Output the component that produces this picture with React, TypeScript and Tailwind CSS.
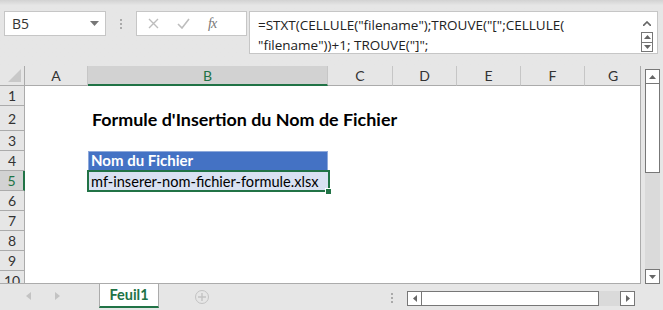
export default function App() {
  const cols = [
    { l: "A", w: "w-[63px]" },
    { l: "B", w: "w-[240px]" },
    { l: "C", w: "w-[65px]" },
    { l: "D", w: "w-[64px]" },
    { l: "E", w: "w-[64px]" },
    { l: "F", w: "w-[64px]" },
    { l: "G", w: "w-[56px]" },
  ];
  const rows = [
    { n: 1, h: "h-[20px]" },
    { n: 2, h: "h-[25px]" },
    { n: 3, h: "h-[20px]" },
    { n: 4, h: "h-[20px]" },
    { n: 5, h: "h-[20px]" },
    { n: 6, h: "h-[20px]" },
    { n: 7, h: "h-[20px]" },
    { n: 8, h: "h-[20px]" },
    { n: 9, h: "h-[20px]" },
    { n: 10, h: "h-[20px]" },
  ];

  return (
    <div className="w-[663px] h-[310px] bg-[#e6e6e6] flex flex-col overflow-hidden font-['Lato','Liberation_Sans',sans-serif] text-[#222]">
      {/* barre de formule */}
      <div className="h-[66px] shrink-0 bg-gradient-to-b from-[#d2d2d2] via-[#e6e6e6] via-[8%] to-[#e6e6e6] flex items-start pt-[11px]">
        <div className="ml-[4px] w-[102px] h-[25px] bg-white border border-[#c6c6c6] flex items-center justify-between pl-[7px] pr-[6px]">
          <span className="text-[14px] font-['Open_Sans',sans-serif] text-[#333]">B5</span>
          <svg width="9" height="5" viewBox="0 0 9 5"><path d="M0 0h9L4.5 5z" fill="#777" /></svg>
        </div>
        <div className="w-[30px] h-[25px] flex flex-col items-center justify-center gap-[2px]">
          <span className="w-[2px] h-[2px] bg-[#aaa]" />
          <span className="w-[2px] h-[2px] bg-[#aaa]" />
          <span className="w-[2px] h-[2px] bg-[#aaa]" />
        </div>
        <div className="w-[111px] h-[25px] bg-white border border-[#c6c6c6] flex items-center pl-[11px] gap-[18px]">
          <svg width="11" height="11" viewBox="0 0 11 11"><path d="M1 1l9 9M10 1l-9 9" stroke="#bdbdbd" strokeWidth="1.4" /></svg>
          <svg width="13" height="11" viewBox="0 0 13 11"><path d="M1 6l4 4 7-9" stroke="#bdbdbd" strokeWidth="1.6" fill="none" /></svg>
          <span className="italic font-['Liberation_Serif',serif] text-[14px] text-[#777] tracking-[-1px]">fx</span>
        </div>
        <div className="ml-[2px] w-[409px] h-[43px] bg-white border border-[#c6c6c6] flex overflow-hidden">
          <div className="flex-1 pl-[8px] pt-[3px] font-['Open_Sans',sans-serif] text-[13.5px] leading-[20px] text-[#222] whitespace-nowrap">
            <div>=STXT(CELLULE("filename");TROUVE("[";CELLULE(</div>
            <div>"filename"))+1; TROUVE("]";</div>
          </div>
          <div className="w-[14px] mr-[3px] flex flex-col items-center pt-[9px]">
            <svg width="8" height="5" viewBox="0 0 8 5"><path d="M0 5L4 1l4 4" stroke="#666" strokeWidth="1.6" fill="none" /></svg>
            <div className="mt-[6px] w-[12px] h-[20px] border border-[#777] flex flex-col">
              <div className="flex-1 border-b border-[#777] flex items-center justify-center">
                <svg width="7" height="4" viewBox="0 0 7 4"><path d="M0 4L3.5 0 7 4z" fill="#666" /></svg>
              </div>
              <div className="flex-1 flex items-center justify-center">
                <svg width="7" height="4" viewBox="0 0 7 4"><path d="M0 0h7L3.5 4z" fill="#666" /></svg>
              </div>
            </div>
          </div>
        </div>
      </div>

      {/* feuille */}
      <div className="h-[218px] shrink-0 flex">
        <div className="w-[641px] h-[218px] bg-white border-r border-b border-[#ababab] flex flex-col overflow-hidden">
          <div className="h-[20px] shrink-0 flex bg-[#e6e6e6]">
            <div className="w-[25px] shrink-0 border-r border-b border-[#ababab] flex items-end justify-end p-[3px]">
              <svg width="13" height="13" viewBox="0 0 13 13"><path d="M13 0v13H0z" fill="#c8c8c8" /></svg>
            </div>
            {cols.map((c, i) => (
              <div
                key={c.l}
                className={
                  c.w +
                  " shrink-0 flex items-center justify-center text-[14px] " +
                  (i < cols.length - 1 ? "border-r border-[#c6c6c6] " : "") +
                  (c.l === "B"
                    ? "bg-[#d2d2d2] text-[#217346] border-b-2 border-b-[#217346]"
                    : "text-[#333] border-b border-b-[#ababab]")
                }
              >
                {c.l}
              </div>
            ))}
          </div>
          {rows.map((r) => (
            <div key={r.n} className={r.h + " shrink-0 flex"}>
              <div
                className={
                  "w-[25px] shrink-0 border-b border-[#ababab] flex items-center justify-center text-[14px] " +
                  (r.n === 5
                    ? "bg-[#d2d2d2] text-[#217346] border-r-2 border-r-[#217346]"
                    : "bg-[#e6e6e6] text-[#333] border-r border-r-[#ababab]")
                }
              >
                {r.n}
              </div>
              <div className="w-[63px] shrink-0" />
              <div className="w-[240px] shrink-0 relative">
                {r.n === 2 && (
                  <div className="absolute left-[4px] bottom-[1px] whitespace-nowrap font-bold text-[17.9px] leading-[22px] text-black">
                    Formule d'Insertion du Nom de Fichier
                  </div>
                )}
                {r.n === 4 && (
                  <div className="h-full bg-[#4472c4] border border-[#8ea9db] flex items-end pl-[2px] pb-[1px] text-white font-bold text-[15px] leading-[18px]">
                    Nom du Fichier
                  </div>
                )}
                {r.n === 5 && (
                  <div className="h-full bg-[#d9e1f2] flex items-end pl-[3px] text-[14.6px] leading-[19px] text-black">
                    mf-inserer-nom-fichier-formule.xlsx
                    <div className="absolute -left-[1px] -top-[1px] -right-[2px] -bottom-[1px] border-2 border-[#217346]" />
                    <div className="absolute -right-[4px] -bottom-[4px] w-[7px] h-[7px] bg-[#217346] border border-white" />
                  </div>
                )}
              </div>
            </div>
          ))}
        </div>
        <div className="ml-[4px] mt-[3px] w-[15px] h-[215px] bg-[#dadada] flex flex-col">
          <div className="h-[15px] bg-white border border-[#777] flex items-center justify-center">
            <svg width="7" height="4" viewBox="0 0 7 4"><path d="M0 4L3.5 0 7 4z" fill="#666" /></svg>
          </div>
          <div className="h-[89px] bg-white border-x border-b border-[#777]" />
          <div className="flex-1" />
          <div className="h-[15px] bg-white border border-[#777] flex items-center justify-center">
            <svg width="7" height="4" viewBox="0 0 7 4"><path d="M0 0h7L3.5 4z" fill="#666" /></svg>
          </div>
        </div>
      </div>

      {/* onglets */}
      <div className="flex-1 flex items-start">
        <div className="w-[99px] h-[24px] flex items-center pl-[26px] gap-[24px]">
          <svg width="5" height="8" viewBox="0 0 5 8"><path d="M5 0v8L0 4z" fill="#c3c3c3" /></svg>
          <svg width="5" height="8" viewBox="0 0 5 8"><path d="M0 0v8l5-4z" fill="#c3c3c3" /></svg>
        </div>
        <div className="w-[60px] h-[24px] bg-white border-x border-[#ababab] border-b-2 border-b-[#217346] flex items-center justify-center text-[#217346] font-bold text-[14.5px]">
          Feuil1
        </div>
        <div className="ml-[36px] mt-[6px] w-[14px] h-[14px] rounded-full border border-[#c3c3c3] flex items-center justify-center">
          <svg width="8" height="8" viewBox="0 0 8 8"><path d="M4 0v8M0 4h8" stroke="#c3c3c3" strokeWidth="1.4" /></svg>
        </div>
        <div className="ml-[182px] mt-[9px] flex flex-col gap-[2px]">
          <span className="w-[2px] h-[2px] bg-[#aaa]" />
          <span className="w-[2px] h-[2px] bg-[#aaa]" />
          <span className="w-[2px] h-[2px] bg-[#aaa]" />
        </div>
        <div className="ml-[14px] mt-[7px] w-[228px] h-[15px] bg-[#dadada] flex">
          <div className="w-[15px] h-full bg-white border border-[#777] flex items-center justify-center">
            <svg width="4" height="7" viewBox="0 0 4 7"><path d="M4 0v7L0 3.5z" fill="#666" /></svg>
          </div>
          <div className="w-[177px] h-full bg-white border-y border-r border-[#777]" />
          <div className="flex-1" />
          <div className="w-[15px] h-full bg-white border border-[#777] flex items-center justify-center">
            <svg width="4" height="7" viewBox="0 0 4 7"><path d="M0 0v7l4-3.5z" fill="#666" /></svg>
          </div>
        </div>
      </div>
    </div>
  );
}
